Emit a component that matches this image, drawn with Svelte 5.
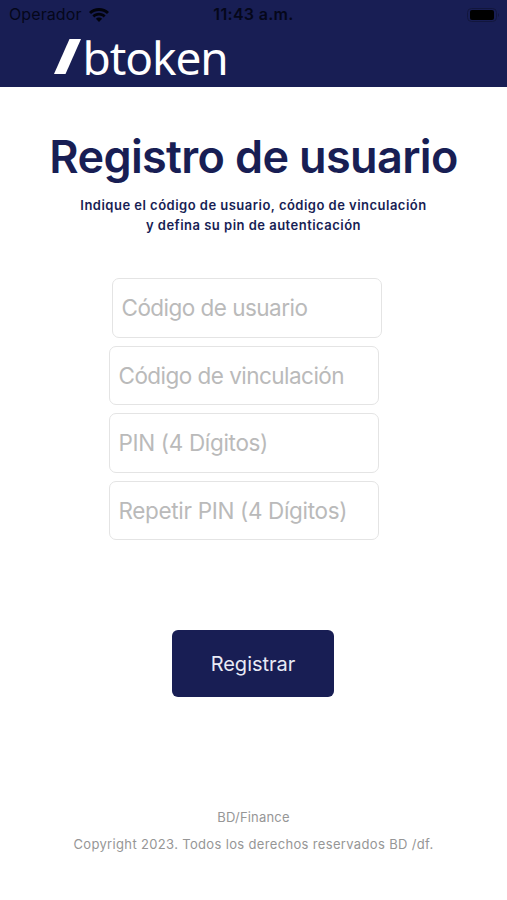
<script lang="ts">
  let userCode = $state('');
  let linkCode = $state('');
  let pin = $state('');
  let pinRepeat = $state('');

  function handleSubmit(e: SubmitEvent) {
    e.preventDefault();
  }
</script>

<div class="screen">
  <header class="header">
    <div class="status-bar">
      <div class="carrier">
        <span>Operador</span>
        <svg class="wifi" viewBox="0 0 20 14" width="20" height="14">
          <path d="M10 0C6.100 0 2.600 1.500 0 3.900L2 6C4.100 4.100 6.900 2.900 10 2.900S15.900 4.100 18 6L20 3.900C17.400 1.500 13.900 0 10 0Z" />
          <path d="M10 4.800C7.400 4.800 5.100 5.800 3.400 7.400L5.400 9.400C6.600 8.300 8.200 7.600 10 7.600S13.400 8.300 14.600 9.400L16.600 7.400C14.900 5.800 12.600 4.800 10 4.800Z" />
          <path d="M10 9.400C8.800 9.400 7.700 9.900 6.900 10.700L10 14L13.100 10.700C12.300 9.900 11.200 9.400 10 9.400Z" />
        </svg>
      </div>
      <span class="time">11:43 a.m.</span>
      <svg class="battery" viewBox="0 0 34 14" width="34" height="14">
        <rect x="0.500" y="0.500" width="29" height="13" rx="4" fill="none" stroke="#12163d" />
        <rect x="3" y="2" width="24" height="10" rx="2" />
        <path d="M31 5Q33 7 31 9Z" fill="#12163d" />
      </svg>
    </div>
    <div class="logo">
      <svg viewBox="0 0 28 36" width="28" height="36">
        <path d="M15.500 0H27L11.500 35H0Z" fill="#fff" />
      </svg>
      <span>btoken</span>
    </div>
  </header>

  <main>
    <h1>Registro de usuario</h1>
    <p class="intro">
      Indique el código de usuario, código de vinculación<br />y defina su pin de autenticación
    </p>

    <form onsubmit={handleSubmit}>
      <div class="fields">
        <input class="first" type="text" placeholder="Código de usuario" bind:value={userCode} />
        <input type="text" placeholder="Código de vinculación" bind:value={linkCode} />
        <input class="pin" type="password" placeholder="PIN (4 Dígitos)" maxlength="4" bind:value={pin} />
        <input class="pin" type="password" placeholder="Repetir PIN (4 Dígitos)" maxlength="4" bind:value={pinRepeat} />
      </div>
      <button type="submit">Registrar</button>
    </form>
  </main>

  <footer>
    <div class="company">BD/Finance</div>
    <div>Copyright 2023. Todos los derechos reservados BD /df.</div>
  </footer>
</div>

<style>
  :global(body) {
    margin: 0;
    background: #fff;
  }

  .screen {
    display: flex;
    flex-direction: column;
    height: 900px;
    box-sizing: border-box;
    overflow: hidden;
    font-family: Inter, 'Liberation Sans', sans-serif;
    color: #181e54;
  }

  .header {
    height: 87px;
    background: #181e54;
    flex-shrink: 0;
  }

  .status-bar {
    display: grid;
    grid-template-columns: 1fr auto 1fr;
    align-items: center;
    height: 29px;
    padding: 0 6px 0 9px;
    font-size: 16px;
    line-height: 29px;
    color: #05071a;
  }

  .carrier {
    display: flex;
    align-items: center;
    gap: 7px;
    letter-spacing: 0.1px;
  }

  .wifi {
    fill: #02030c;
  }

  .time {
    font-weight: 600;
    letter-spacing: 0.3px;
    margin-right: 3px;
  }

  .battery {
    justify-self: end;
  }

  .logo {
    display: flex;
    align-items: flex-start;
    height: 58px;
    padding: 10px 0 0 54px;
    box-sizing: border-box;
    color: #fff;
  }

  .logo span {
    font-family: 'Noto Sans', 'Open Sans', sans-serif;
    font-size: 46px;
    line-height: 36px;
    letter-spacing: -1.100px;
    margin-left: 0.500px;
  }

  main {
    display: flex;
    flex-direction: column;
    align-items: center;
  }

  h1 {
    margin: 42px 0 0;
    font-size: 45px;
    line-height: 56px;
    font-weight: 600;
    letter-spacing: -0.650px;
    white-space: nowrap;
  }

  .intro {
    margin: 10px 0 0;
    font-size: 13px;
    line-height: 20px;
    font-weight: 600;
    letter-spacing: 0.480px;
    text-align: center;
  }

  form {
    display: flex;
    flex-direction: column;
    align-items: center;
    margin-top: 43px;
  }

  .fields {
    display: flex;
    flex-direction: column;
    gap: 8px;
    width: 290px;
  }

  input {
    width: 270px;
    height: 59.500px;
    margin: 0;
    padding: 0 9px;
    box-sizing: border-box;
    border: 1px solid #e4e4e4;
    border-radius: 7px;
    background: #fff;
    color: #181e54;
    font-family: inherit;
    font-size: 22.500px;
    letter-spacing: -0.530px;
  }

  input.first {
    margin-left: 3px;
  }

  input.pin {
    letter-spacing: -0.330px;
  }

  input::placeholder {
    color: #bababa;
    opacity: 1;
  }

  button {
    width: 162px;
    height: 67px;
    margin: 90px 1px 0 0;
    padding: 0;
    border: none;
    border-radius: 6px;
    background: #181e54;
    color: #e8eaf5;
    font-family: inherit;
    font-size: 20px;
  }

  footer {
    margin-top: 107px;
    font-size: 13px;
    line-height: 27px;
    letter-spacing: 0.340px;
    text-align: center;
    color: #969696;
  }

  .company {
    letter-spacing: 0.2px;
  }
</style>
